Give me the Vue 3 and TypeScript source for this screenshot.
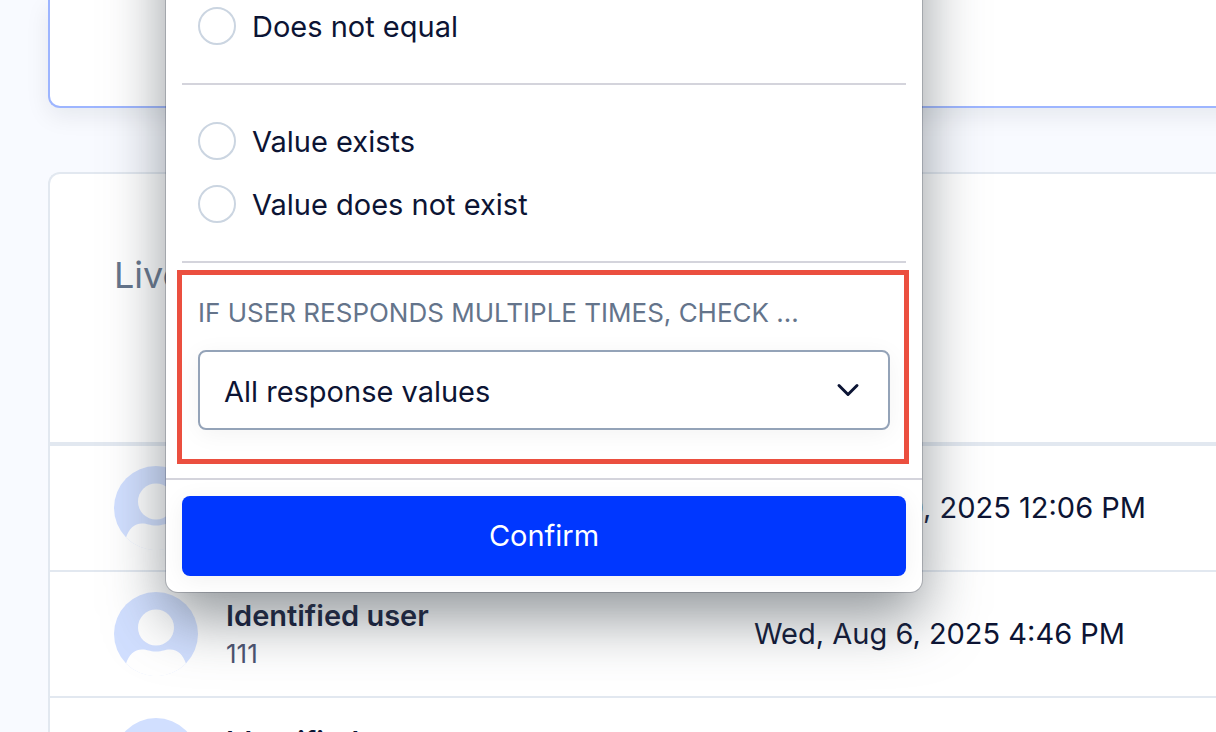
<script setup lang="ts">
import { ref } from 'vue'

interface Response {
  name: string
  id: string
  date: string
}

const groups: string[][] = [['Does not equal'], ['Value exists', 'Value does not exist']]
const operator = ref('')
const scope = ref('all')

const responses: Response[] = [
  { name: 'Identified user', id: '112', date: 'Wed, Sep 10, 2025 12:06 PM' },
  { name: 'Identified user', id: '111', date: 'Wed, Aug 6, 2025 4:46 PM' },
  { name: 'Identified user', id: '110', date: 'Wed, Aug 6, 2025 4:40 PM' },
]
</script>

<template>
  <main class="page">
    <section class="card filter-card"></section>

    <section class="card responses">
      <header class="responses-head">
        <h2>Live responses</h2>
      </header>
      <table>
        <tbody>
          <tr v-for="(r, i) in responses" :key="i">
            <td class="user-cell">
              <div class="user">
                <svg class="avatar" viewBox="0 0 84 84" aria-hidden="true">
                  <circle cx="42" cy="42" r="42" fill="#d1dfff" />
                  <circle cx="42" cy="35.5" r="18" fill="#fff" />
                  <path
                    d="M12 71.5C15 63 20 57.5 28 57.5C34 57.5 35 59.5 42 59.5C49 59.5 50 57.5 56 57.5C64 57.5 69 63 72 71.5A42 42 0 0 1 12 71.5Z"
                    fill="#fff"
                  />
                </svg>
                <div class="who">
                  <strong>{{ r.name }}</strong>
                  <span>{{ r.id }}</span>
                </div>
              </div>
            </td>
            <td class="date-cell">{{ r.date }}</td>
          </tr>
        </tbody>
      </table>
    </section>

    <form class="popover" @submit.prevent>
      <div class="options">
        <div v-for="(group, g) in groups" :key="g" class="group">
          <label v-for="option in group" :key="option" class="option">
            <input v-model="operator" type="radio" name="operator" :value="option" />
            <span>{{ option }}</span>
          </label>
        </div>
      </div>
      <div class="scope">
        <label for="scope">IF USER RESPONDS MULTIPLE TIMES, CHECK ...</label>
        <div class="select">
          <select id="scope" v-model="scope">
            <option value="all">All response values</option>
          </select>
          <svg class="chevron" viewBox="0 0 24 14" aria-hidden="true">
            <path d="M3 2.5L12 11.5L21 2.5" />
          </svg>
        </div>
        <div class="highlight"></div>
      </div>
      <footer>
        <button type="submit">Confirm</button>
      </footer>
    </form>
  </main>
</template>

<style>
body {
  margin: 0;
}
</style>

<style scoped>
* {
  box-sizing: border-box;
}

.page {
  position: relative;
  height: 100vh;
  overflow: hidden;
  padding-left: 48px;
  background: #f8faff;
  color: #0c1434;
  font-family: Inter, 'Liberation Sans', sans-serif;
  font-size: 29px;
  line-height: 40px;
}

.card {
  margin-right: -32px;
  background: #fff;
  border-left: 2px solid #e2e8f0;
}

.filter-card {
  height: 108px;
  margin-bottom: 64px;
  border-left-color: #9db5ff;
  border-bottom: 2px solid #9db5ff;
  border-bottom-left-radius: 12px;
  box-shadow: 0 8px 24px rgba(15, 20, 40, 0.08);
}

.responses {
  border-top: 2px solid #e2e8f0;
  border-top-left-radius: 12px;
}

.responses-head {
  padding: 77px 64px 143px;
  border-bottom: 4px solid #e2e8f0;
}

h2 {
  margin: 0;
  color: #64748b;
  font-size: 36px;
  font-weight: 400;
  line-height: 48px;
}

table {
  width: 100%;
  border-collapse: separate;
  border-spacing: 0;
  table-layout: fixed;
}

td {
  padding: 20px 0;
  border-bottom: 2px solid #e2e8f0;
}

.user-cell {
  width: 704px;
  padding-left: 64px;
}

.user {
  display: flex;
  align-items: center;
  gap: 28px;
}

.avatar {
  width: 84px;
  height: 84px;
}

.who {
  display: flex;
  flex-direction: column;
}

.who strong {
  font-weight: 600;
}

.who span {
  color: #4b5270;
  font-size: 26px;
  line-height: 36px;
}

.popover {
  position: absolute;
  top: -120px;
  left: 166px;
  width: 756px;
  padding-top: 120px;
  background: #fff;
  border-radius: 12px;
  box-shadow:
    0 0 0 1px rgba(15, 20, 40, 0.2),
    0 26px 60px rgba(74, 82, 88, 0.6);
}

.group {
  display: flex;
  flex-direction: column;
  gap: 25px;
  margin: 0 16px;
  padding: 37px 16px 38px;
  border-bottom: 2px solid #d4d4dc;
}

.group:first-child {
  padding-top: 7px;
}

.option {
  display: flex;
  align-items: center;
  gap: 16px;
  height: 38px;
}

.option span {
  padding-top: 2px;
}

.option input {
  appearance: none;
  width: 38px;
  height: 38px;
  margin: 0;
  border: 2px solid #cbd5e1;
  border-radius: 50%;
  background: #fff;
}

.scope {
  position: relative;
  padding: 30px 32px 48px;
}

.scope label {
  display: block;
  margin-bottom: 17px;
  color: #64748b;
  font-size: 26px;
}

.select {
  display: grid;
  align-items: center;
}

.select > * {
  grid-area: 1 / 1;
}

select {
  appearance: none;
  width: 100%;
  height: 80px;
  margin: 0;
  padding: 4px 64px 0 24px;
  border: 2px solid #94a3b8;
  border-radius: 8px;
  background: #fff;
  box-shadow: 0 4px 24px rgba(0, 0, 0, 0.05);
  color: inherit;
  font: inherit;
}

.chevron {
  justify-self: end;
  width: 24px;
  height: 14px;
  margin-right: 30px;
  fill: none;
  stroke: #0c1434;
  stroke-width: 3;
  stroke-linecap: round;
  stroke-linejoin: round;
  pointer-events: none;
}

footer {
  padding: 16px;
  border-top: 2px solid #d4d4dc;
}

button {
  display: block;
  width: 100%;
  height: 80px;
  border: 0;
  border-radius: 8px;
  background: #0037ff;
  box-shadow: 0 4px 24px rgba(0, 0, 0, 0.06);
  color: #fff;
  font: inherit;
}

.highlight {
  position: absolute;
  inset: 7px 13px 14px 11px;
  border: 5px solid #eb4f3f;
  pointer-events: none;
}
</style>
